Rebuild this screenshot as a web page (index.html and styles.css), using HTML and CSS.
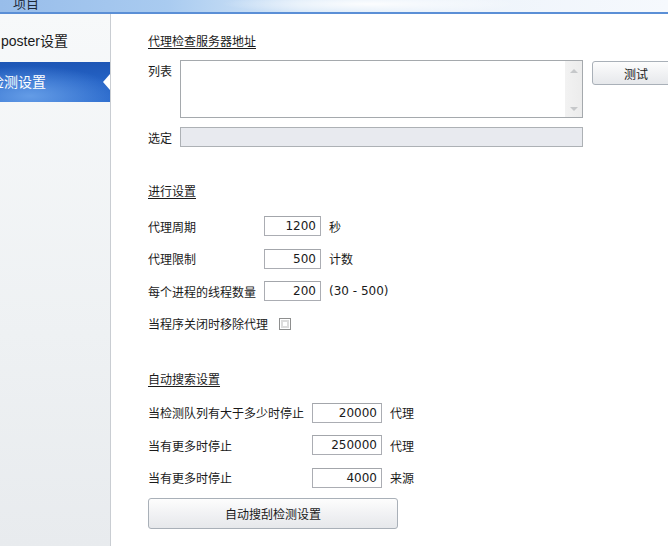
FILE: index.html
```html
<!DOCTYPE html>
<html lang="zh-CN">
<head>
<meta charset="utf-8">
<link rel="stylesheet" href="styles.css">
</head>
<body>
<div class="topbar"><span class="tab">项目</span><div class="glow"></div></div>
<div class="main">
  <nav class="sidebar">
    <div class="nav-item">poster设置</div>
    <div class="nav-item active">检测设置<span class="notch"></span></div>
  </nav>
  <section class="content">
    <h2 class="sec-title first">代理检查服务器地址</h2>
    <div class="list-row">
      <span class="lbl-short">列表</span>
      <div class="listbox">
        <div class="scrollbar">
          <span class="arr up"></span>
          <span class="arr down"></span>
        </div>
      </div>
      <button class="btn test">测试</button>
    </div>
    <div class="sel-row">
      <span class="lbl-short">选定</span>
      <div class="selbox"></div>
    </div>

    <h2 class="sec-title s2">进行设置</h2>
    <div class="form f2">
      <div class="row"><span class="lbl">代理周期</span><span class="num w56">1200</span><span class="unit">秒</span></div>
      <div class="row"><span class="lbl">代理限制</span><span class="num w56">500</span><span class="unit">计数</span></div>
      <div class="row"><span class="lbl">每个进程的线程数量</span><span class="num w56">200</span><span class="unit">(30 - 500)</span></div>
      <div class="row"><span class="lbl-auto">当程序关闭时移除代理</span><span class="check"></span></div>
    </div>

    <h2 class="sec-title s3">自动搜索设置</h2>
    <div class="form f3">
      <div class="row"><span class="lbl">当检测队列有大于多少时停止</span><span class="num w70">20000</span><span class="unit">代理</span></div>
      <div class="row"><span class="lbl">当有更多时停止</span><span class="num w70">250000</span><span class="unit">代理</span></div>
      <div class="row"><span class="lbl">当有更多时停止</span><span class="num w70">4000</span><span class="unit">来源</span></div>
    </div>
    <button class="btn big">自动搜刮检测设置</button>
  </section>
</div>
</body>
</html>
```

FILE: styles.css
```css
html, body {
  margin: 0;
  padding: 0;
  width: 668px;
  height: 546px;
  overflow: hidden;
  background: #ffffff;
  font-family: "Liberation Sans", "Noto Sans CJK SC", sans-serif;
  font-size: 12px;
  color: #1a1a1a;
}

.topbar {
  position: relative;
  height: 12px;
  background: linear-gradient(to right, #98bdea 0%, #a9cbf0 25%, #d8e8f8 45%, #eef4fb 70%, #f6f9fd 100%);
  border-bottom: 2px solid #5b8fd6;
  overflow: hidden;
}
.topbar .tab {
  position: absolute;
  left: 13px;
  top: -7px;
  font-size: 13px;
  color: #1d2a3a;
}
.topbar .glow {
  position: absolute;
  left: 220px;
  top: -6px;
  width: 300px;
  height: 20px;
  background: radial-gradient(ellipse at center, rgba(255,255,255,0.9), rgba(255,255,255,0) 70%);
}

.main {
  display: flex;
  height: 532px;
}

.sidebar {
  width: 110px;
  flex: none;
  background: linear-gradient(to bottom, #f7f9fa 0%, #eef1f3 60%, #e8ebee 100%);
  border-right: 1px solid #c9cdd2;
  padding-top: 15px;
  box-sizing: content-box;
  overflow: hidden;
}
.nav-item {
  height: 24px;
  line-height: 24px;
  font-size: 14px;
  padding-left: 1px;
  color: #1a1a1a;
  white-space: nowrap;
}
.nav-item.active {
  position: relative;
  margin-top: 9px;
  height: 40px;
  line-height: 40px;
  padding-left: 0;
  text-indent: -10px;
  color: #ffffff;
  background:
    radial-gradient(ellipse 90px 30px at 30px 34px, rgba(110,165,235,0.85), rgba(110,165,235,0) 100%),
    linear-gradient(to bottom, #1d56b5 0%, #2563c6 50%, #2b6bcd 100%);
}
.notch {
  position: absolute;
  right: 0;
  top: 12px;
  width: 0;
  height: 0;
  border-top: 8px solid transparent;
  border-bottom: 8px solid transparent;
  border-right: 7px solid #ffffff;
}

.content {
  flex: 1;
  padding-left: 37px;
  padding-top: 20px;
}

.sec-title {
  margin: 0;
  font-size: 12px;
  font-weight: normal;
  line-height: 16px;
  height: 16px;
  text-decoration: underline;
  text-underline-offset: 2px;
}
.sec-title.s2 { margin-top: 37px; }
.sec-title.s3 { margin-top: 38px; }

.list-row {
  display: flex;
  align-items: flex-start;
  margin-top: 10px;
}
.lbl-short {
  width: 32px;
  flex: none;
  line-height: 16px;
  padding-top: 4px;
}
.listbox {
  width: 401px;
  height: 56px;
  border: 1px solid #a5a9ad;
  background: #ffffff;
  display: flex;
  justify-content: flex-end;
}
.scrollbar {
  width: 17px;
  height: 56px;
  background: linear-gradient(to right, #f2f2f2, #ececec);
  display: flex;
  flex-direction: column;
  justify-content: space-between;
  align-items: center;
  padding: 8px 0 6px;
  box-sizing: border-box;
}
.arr {
  width: 0;
  height: 0;
  border-left: 4px solid transparent;
  border-right: 4px solid transparent;
}
.arr.up { border-bottom: 4px solid #c6c8ca; }
.arr.down { border-top: 4px solid #c6c8ca; }

.btn {
  font-family: inherit;
  font-size: 12px;
  color: #1a1a1a;
  border: 1px solid #a9b0b8;
  border-radius: 3px;
  background: linear-gradient(to bottom, #fdfdfd 0%, #f1f2f4 50%, #e6e8eb 100%);
  padding: 0;
}
.btn.test {
  margin-left: 9px;
  margin-top: 1px;
  width: 88px;
  height: 24px;
  flex: none;
}
.btn.big {
  display: block;
  margin-top: 10px;
  width: 250px;
  height: 31px;
}

.sel-row {
  display: flex;
  align-items: center;
  margin-top: 9px;
}
.selbox {
  width: 401px;
  height: 18px;
  border: 1px solid #adb1b5;
  background: #e8eaef;
}

.form { display: flex; flex-direction: column; }
.f2 { margin-top: 16px; gap: 12.67px; }
.f3 { margin-top: 15px; gap: 12.5px; }
.row {
  display: flex;
  align-items: center;
  height: 20px;
}
.f2 .lbl { width: 116px; flex: none; }
.f3 .lbl { width: 164px; flex: none; }
.lbl-auto { margin-right: 11px; }
.num {
  box-sizing: border-box;
  height: 20px;
  line-height: 18px;
  border: 1px solid #abadb3;
  border-top-color: #a3a6ab;
  text-align: right;
  padding-right: 4px;
  font-family: "DejaVu Sans", "Noto Sans CJK SC", sans-serif;
  font-size: 12px;
  background: #ffffff;
  flex: none;
}
.w56 { width: 57px; }
.w70 { width: 70px; }
.unit {
  margin-left: 8px;
  font-family: "DejaVu Sans", "Noto Sans CJK SC", sans-serif;
}
.check {
  box-sizing: border-box;
  width: 12px;
  height: 12px;
  border: 1px solid #8e8f8f;
  background: #ffffff;
  box-shadow: inset 0 0 0 1px #ffffff, inset 0 0 0 3px #dcdcdc;
}
```
